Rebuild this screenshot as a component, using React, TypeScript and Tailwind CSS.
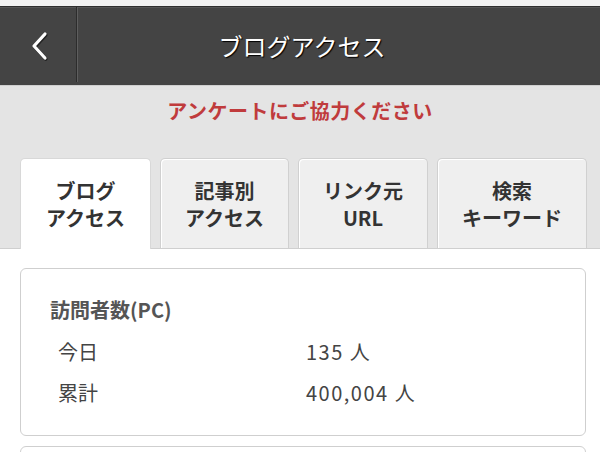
import React from "react";

const font = { fontFamily: '"Noto Sans CJK JP", "Noto Sans", sans-serif' };

function Tab({ lines, active }: { lines: string[]; active?: boolean }) {
  return (
    <div
      className={
        "flex flex-col items-center justify-center rounded-t-[5px] border border-b-0 text-[20px] font-bold leading-[27px] text-[#333] " +
        (active
          ? "bg-white border-[#d8d8d8] h-[91px] -mb-px"
          : "bg-[#efefef] border-[#d0d0d0] h-[90px] shadow-[inset_1px_1px_0_#fff]")
      }
    >
      {lines.map((l) => (
        <span key={l}>{l}</span>
      ))}
    </div>
  );
}

export default function App() {
  return (
    <div className="w-[600px] h-[452px] overflow-hidden bg-white" style={font}>
      <div className="h-[6px] bg-[#f2f2f2]" />
      <div className="relative flex h-[79px] bg-[#444444] border-t border-[#2e2e2e] shadow-[inset_0_1px_0_#555]">
        <div className="flex w-[76px] items-center justify-center pl-[2px]">
          <svg width="20" height="32" viewBox="0 0 20 32">
            <path d="M16 4 L5 16 L16 28" fill="none" stroke="#000" strokeOpacity="0.5" strokeWidth="3.6" strokeLinecap="round" strokeLinejoin="round" transform="translate(0.8,1)" />
            <path d="M16 4 L5 16 L16 28" fill="none" stroke="#fff" strokeWidth="3.2" strokeLinecap="round" strokeLinejoin="round" />
          </svg>
        </div>
        <div className="mb-[3px] border-l border-[#2c2c2c] bg-[#5e5e5e] w-[2px]" />
        <div className="flex-1" />
        <div className="absolute inset-0 flex items-center justify-center pl-[4px] text-[24px] text-white [text-shadow:1px_1px_1px_#000] pointer-events-none">
          ブログアクセス
        </div>
      </div>
      <div className="bg-[#e4e4e4] pt-[12px] border-t border-[#cfcfcf]">
        <div className="text-center text-[20px] font-bold leading-[26px] text-[#c03b3c] tracking-[0.5px]">
          アンケートにご協力ください
        </div>
        <div className="mt-[34px] grid grid-cols-[131px_129px_130px_150px] gap-[9px] pl-[20px] border-b border-[#cfcfcf]">
          <Tab lines={["ブログ", "アクセス"]} active />
          <Tab lines={["記事別", "アクセス"]} />
          <Tab lines={["リンク元", "URL"]} />
          <Tab lines={["検索", "キーワード"]} />
        </div>
      </div>
      <div className="pl-[20px] pr-[14px] pt-[19px] flex flex-col gap-[10px]">
        <div className="h-[168px] rounded-[6px] border-[1.5px] border-[#cfcfcf] pl-[29px] pt-[27px]">
          <div className="text-[20px] font-bold text-[#555] leading-[28px]">訪問者数(PC)</div>
          <div className="mt-[14px] flex flex-col gap-[13px] text-[20px] text-[#444] leading-[28px]">
            <div className="flex">
              <span className="w-[256px] pl-[8px]">今日</span>
              <span className="tracking-[1.5px]">135 人</span>
            </div>
            <div className="flex">
              <span className="w-[256px] pl-[8px]">累計</span>
              <span className="tracking-[1.5px]">400,004 人</span>
            </div>
          </div>
        </div>
        <div className="h-[40px] rounded-[6px] border-[1.5px] border-[#cfcfcf]" />
      </div>
    </div>
  );
}
